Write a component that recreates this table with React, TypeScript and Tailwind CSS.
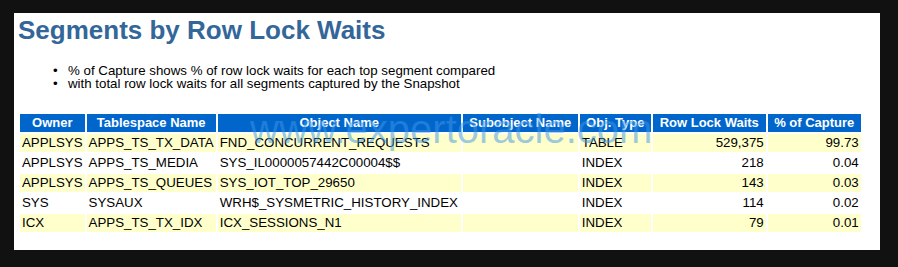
import React from "react";

const columns = [
  { label: "Owner", w: "w-[64px]" },
  { label: "Tablespace Name", w: "w-[129px]" },
  { label: "Object Name", w: "w-[243px]" },
  { label: "Subobject Name", w: "w-[115px]" },
  { label: "Obj. Type", w: "w-[71px]" },
  { label: "Row Lock Waits", w: "w-[113px]" },
  { label: "% of Capture", w: "w-[93px]" },
];

const rows = [
  ["APPLSYS", "APPS_TS_TX_DATA", "FND_CONCURRENT_REQUESTS", "", "TABLE", "529,375", "99.73"],
  ["APPLSYS", "APPS_TS_MEDIA", "SYS_IL0000057442C00004$$", "", "INDEX", "218", "0.04"],
  ["APPLSYS", "APPS_TS_QUEUES", "SYS_IOT_TOP_29650", "", "INDEX", "143", "0.03"],
  ["SYS", "SYSAUX", "WRH$_SYSMETRIC_HISTORY_INDEX", "", "INDEX", "114", "0.02"],
  ["ICX", "APPS_TS_TX_IDX", "ICX_SESSIONS_N1", "", "INDEX", "79", "0.01"],
];

const notes = [
  "% of Capture shows % of row lock waits for each top segment compared",
  "with total row lock waits for all segments captured by the Snapshot",
];

export default function App() {
  return (
    <div className="w-[898px] h-[267px] bg-[#111111] pt-[13px] pl-[14px] font-['Liberation_Sans',Arial,sans-serif]">
      <div className="relative w-[866px] h-[237px] bg-white pt-[2px] px-1">
        <h1 className="text-[26px] leading-[30px] font-bold text-[#336699]">
          Segments by Row Lock Waits
        </h1>

        <ul className="mt-[20px] pl-[35px] text-[13.3px] leading-[12.5px] text-black">
          {notes.map((n) => (
            <li key={n} className="flex">
              <span className="w-[15px] shrink-0">•</span>
              <span>{n}</span>
            </li>
          ))}
        </ul>

        <table className="mt-[22px] table-fixed border-separate border-spacing-[2px] text-[13.3px] leading-[18px]">
          <thead>
            <tr>
              {columns.map((c) => (
                <th
                  key={c.label}
                  className={`${c.w} h-[18px] p-0 bg-[#0066cc] text-white text-[13px] font-bold text-center whitespace-nowrap`}
                >
                  {c.label}
                </th>
              ))}
            </tr>
          </thead>
          <tbody>
            {rows.map((r, i) => (
              <tr key={i} className={i % 2 === 0 ? "bg-[#ffffcc]" : "bg-white"}>
                {r.map((cell, j) => (
                  <td
                    key={j}
                    className={`h-[18px] py-0 px-[2px] text-black whitespace-nowrap ${
                      j >= 5 ? "text-right" : "text-left"
                    }`}
                  >
                    {cell}
                  </td>
                ))}
              </tr>
            ))}
          </tbody>
        </table>

        {/* watermark */}
        <div className="absolute left-[236px] top-[96px] text-[40px] leading-[40px] text-[#3c96e6]/50 pointer-events-none whitespace-nowrap">
          www.expertoracle.com
        </div>
      </div>
    </div>
  );
}
